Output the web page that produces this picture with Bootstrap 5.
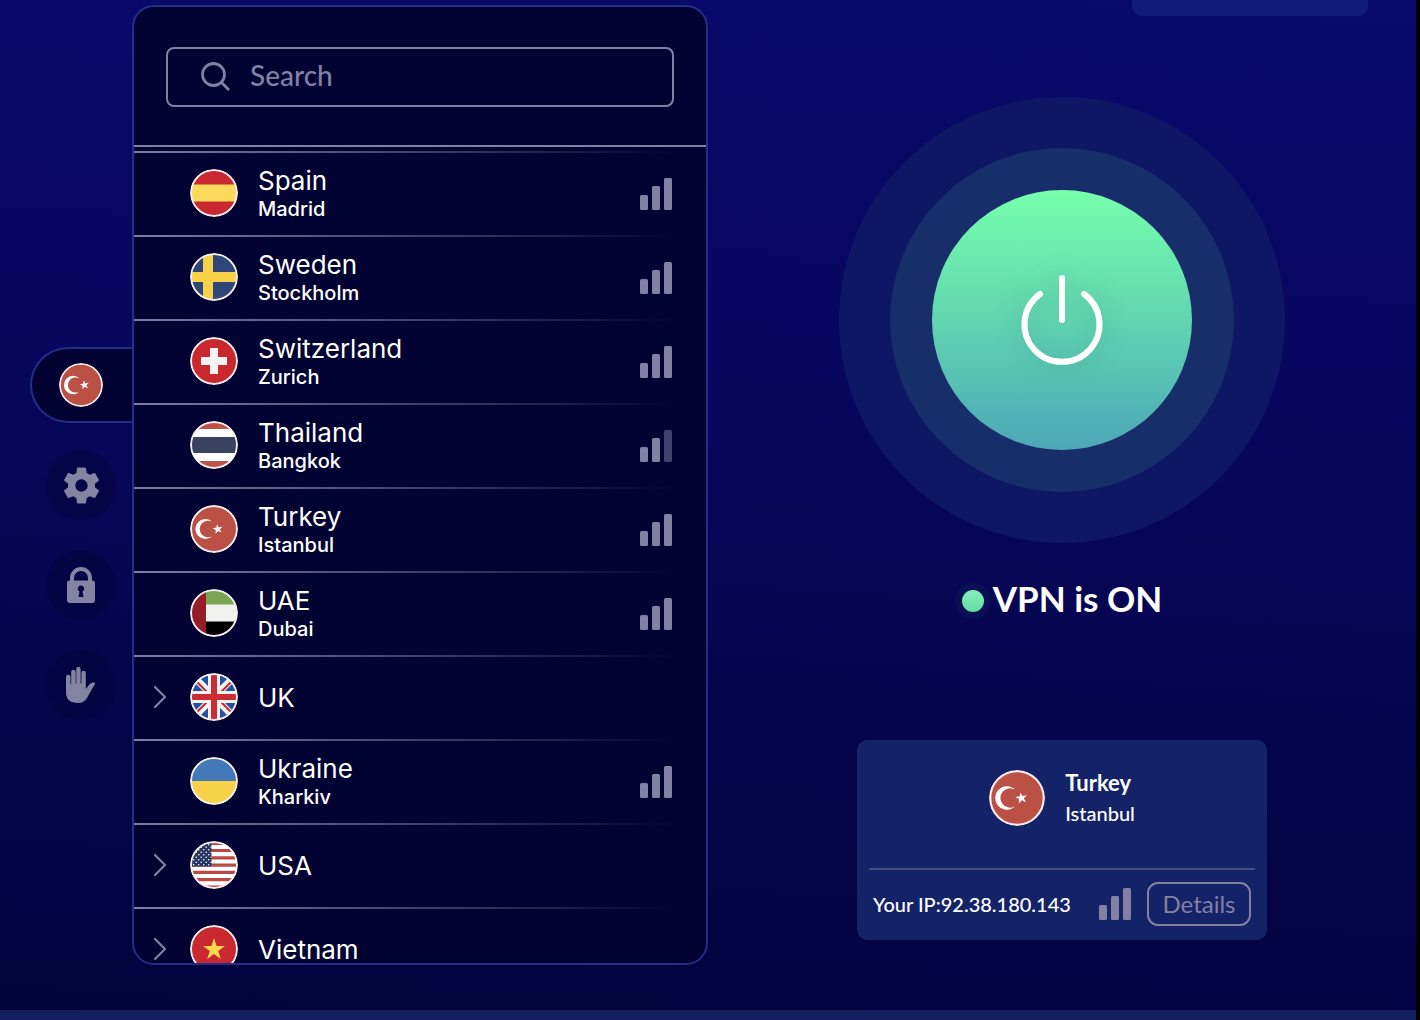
<!DOCTYPE html>
<html lang="en">
<head>
<meta charset="utf-8">
<meta name="viewport" content="width=device-width, initial-scale=1">
<title>VPN</title>
<link href="https://cdn.jsdelivr.net/npm/bootstrap@5.3.0/dist/css/bootstrap.min.css" rel="stylesheet">
<style>
  :root { --ink: #020233; --edge: #222e8a; --muted: #8280a3; }
  body { font-family: Lato, sans-serif; background: #000; color: #fff; }
  .app-shell { height: 100vh; min-height: 760px; margin-right: 4px; background: linear-gradient(184deg, #080a6c 0%, #070760 35%, #05054e 65%, #03033e 100%); }
  .app-main { min-height: 0; }
  .bottom-strip { height: 10px; background: #13205f; }

  /* left rail */
  .rail { width: 132px; padding-top: 347px; padding-left: 30px; }
  .rail-tab { height: 76px; padding-left: 27px; background: var(--ink); border: 2px solid var(--edge); border-right: 0; border-radius: 38px 0 0 38px; }
  .rail-btn { width: 70px; height: 70px; margin-left: 16px; background: #04043e99; color: #8583a2; }
  .rail-stack { gap: 30px; margin-top: 27px; }

  /* server list */
  .server-panel { width: 576px; margin: 5px 0 45px; background: var(--ink); border: 2px solid var(--edge); border-radius: 22px; }
  .search-area { padding: 40px 32px 38px; border-bottom: 2px solid var(--muted); }
  .search-field { height: 60px; border: 2px solid var(--muted); border-radius: 8px; padding: 0 32px; gap: 18px; color: var(--muted); }
  .search-field input { background: none; border: 0; outline: 0; color: #fff; font-size: 28px; font-weight: 500; line-height: 36px; padding: 0 0 4px; }
  .search-field input::placeholder { color: var(--muted); opacity: 1; }
  .server-list { margin-top: 4px; min-height: 0; overflow-y: auto; scrollbar-width: none; font-family: Inter, sans-serif; }
  .server-list::-webkit-scrollbar { display: none; }
  .server-row { flex: none; height: 84px; border: 0; padding: 0 34px 0 0; color: #fff; text-align: left;
    background: linear-gradient(90deg, #7f7da3 0%, #5a5984 30%, #25254f 70%, transparent 95%) top / 100% 2px no-repeat; }
  .caret-slot { width: 56px; padding-left: 19px; color: var(--muted); }
  .flag { flex: none; display: block; border-radius: 50%; }
  .flag-48 { width: 48px; height: 48px; }
  .flag-44 { width: 44px; height: 44px; }
  .flag-56 { width: 56px; height: 56px; }
  .names { margin-left: 20px; padding-top: 4px; }
  .country { font-size: 26px; line-height: 28px; }
  .country:only-child { padding-bottom: 2px; }
  .city { font-size: 20px; line-height: 28px; font-weight: 500; }
  .signal { width: 32px; height: 32px; color: var(--muted); }
  .server-row .signal { margin-top: 2px; }

  /* connection stage */
  .top-chip { height: 16px; width: 236px; margin-right: 48px; background: #101b7a; border-radius: 0 0 10px 10px; }
  .ring-outer { width: 446px; height: 446px; margin-top: 81px; background: #0d1763; }
  .ring-inner { width: 344px; height: 344px; background: #182e6b; }
  .power-btn { width: 260px; height: 260px; background: linear-gradient(#76ffac, #60d4b0 52%, #4ca7b8); }
  .power-btn svg { filter: drop-shadow(0 0 12px #2a6a6a55); }
  .status { margin-top: 31px; gap: 9px; }
  .status-text { font-size: 35px; line-height: 48px; font-weight: 700; }
  .status-dot { width: 22px; height: 22px; margin-top: 6px; background: linear-gradient(#86eebb, #62dda0); box-shadow: 0 0 0 7px #0a1055; }
  .info-card { width: 410px; margin-top: 118px; padding: 0 12px 14px; border-radius: 10px; background: #142368; }
  .info-head { padding: 28px 0 40px; gap: 20px; border-bottom: 2px solid #454b81; }
  .info-country { font-size: 22px; line-height: 30px; font-weight: 700; }
  .info-city, .ip-text { font-size: 20px; line-height: 30px; font-weight: 500; }
  .info-foot { padding: 12px 4px 0; }
  .details-btn { width: 104px; height: 44px; padding: 0; border: 2px solid var(--muted); border-radius: 11px; color: var(--muted); font-size: 24px; line-height: 36px; }
</style>
<script src="https://cdn.jsdelivr.net/npm/bootstrap@5.3.0/dist/js/bootstrap.bundle.min.js" defer></script>
</head>
<body>
<svg class="position-absolute" width="0" height="0" aria-hidden="true">
  <defs>
    <clipPath id="disc"><circle cx="24" cy="24" r="23"/></clipPath>
    <pattern id="stars" width="5" height="5" patternUnits="userSpaceOnUse"><rect width="5" height="5" fill="#25355f"/><circle cx="1.2" cy="1.2" r=".8" fill="#fff"/><circle cx="3.7" cy="3.7" r=".8" fill="#fff"/></pattern>
  </defs>
  <symbol id="rim" viewBox="0 0 48 48"><circle cx="24" cy="24" r="23" fill="none" stroke="#f8eeee" stroke-width="2"/></symbol>
  <symbol id="f-es" viewBox="0 0 48 48"><g clip-path="url(#disc)"><path fill="#c8282e" d="M0 0h48v48H0z"/><path fill="#fbda5b" d="M0 15.500h48v17H0z"/></g><use href="#rim"/></symbol>
  <symbol id="f-se" viewBox="0 0 48 48"><g clip-path="url(#disc)"><path fill="#2f4678" d="M0 0h48v48H0z"/><path fill="#f7d148" d="M13 0h10v48H13zM0 19h48v10H0z"/></g><use href="#rim"/></symbol>
  <symbol id="f-ch" viewBox="0 0 48 48"><g clip-path="url(#disc)"><path fill="#c8282e" d="M0 0h48v48H0z"/><path fill="#f3f3f3" d="M20 11h8v9h9v8h-9v9h-8v-9h-9v-8h9z"/></g><use href="#rim"/></symbol>
  <symbol id="f-th" viewBox="0 0 48 48"><g clip-path="url(#disc)"><path fill="#bd5145" d="M0 0h48v48H0z"/><path fill="#fff" d="M0 8h48v32H0z"/><path fill="#39435f" d="M0 16h48v16H0z"/></g><use href="#rim"/></symbol>
  <symbol id="f-tr" viewBox="0 0 48 48"><g clip-path="url(#disc)"><path fill="#bb5044" d="M0 0h48v48H0z"/><path fill="#fff" d="M22.500 17A10 10 0 1 0 22.500 31 8.300 8.300 0 1 1 22.500 17zM27.100 19.200l1.500 3 3.900-.5-2.700 2.500 1.900 3.400-3.500-1.600-2.700 2.700.3-3.800-3.200-1.700 3.700-.7z"/></g><use href="#rim"/></symbol>
  <symbol id="f-ae" viewBox="0 0 48 48"><g clip-path="url(#disc)"><path fill="#f1f1f0" d="M0 0h48v48H0z"/><path fill="#7ca553" d="M0 0h48v15.500H0z"/><path d="M0 32.500h48V48H0z"/><path fill="#941d27" d="M0 0h16v48H0z"/></g><use href="#rim"/></symbol>
  <symbol id="f-gb" viewBox="0 0 48 48"><g clip-path="url(#disc)"><path fill="#2450a6" d="M0 0h48v48H0z"/><path stroke="#f3f3f3" stroke-width="7" d="M0 0l48 48M48 0L0 48"/><path stroke="#c8282e" stroke-width="2" d="M1 3l22 22M47 3L25 25M1 45l22-22M47 45L25 23"/><path stroke="#f3f3f3" stroke-width="12" d="M24 0v48M0 24h48"/><path stroke="#cb2d35" stroke-width="6" d="M24 0v48M0 24h48"/></g><use href="#rim"/></symbol>
  <symbol id="f-ua" viewBox="0 0 48 48"><g clip-path="url(#disc)"><path fill="#427ab9" d="M0 0h48v24H0z"/><path fill="#f7d148" d="M0 24h48v24H0z"/></g><use href="#rim"/></symbol>
  <symbol id="f-us" viewBox="0 0 48 48"><g clip-path="url(#disc)"><path fill="#fff" d="M0 0h48v48H0z"/><path stroke="#b94a43" stroke-width="3.200" d="M0 2.500h48M0 9.500h48M0 16.800h48M0 24.100h48M0 31.400h48M0 38.700h48M0 46h48"/><path fill="url(#stars)" d="M0 0h21.500v25.500H0z"/></g><use href="#rim"/></symbol>
  <symbol id="f-vn" viewBox="0 0 48 48"><g clip-path="url(#disc)"><path fill="#c8282e" d="M0 0h48v48H0z"/><path fill="#fbd84f" d="M24 13l2.600 8h8.400l-6.800 5 2.600 8-6.800-5-6.800 5 2.600-8-6.800-5h8.400z"/></g><use href="#rim"/></symbol>
  <symbol id="bars" viewBox="0 0 32 32"><g fill="currentColor"><rect y="17" width="8" height="15" rx="1.500"/><rect x="12" y="8" width="8" height="24" rx="1.500"/><rect x="24" width="8" height="32" rx="1.500"/></g></symbol>
  <symbol id="bars-weak" viewBox="0 0 32 32"><g fill="currentColor"><rect y="17" width="8" height="15" rx="1.500"/><rect x="12" y="8" width="8" height="24" rx="1.500"/><rect x="24" width="8" height="32" rx="1.500" opacity=".5"/></g></symbol>
  <symbol id="caret" viewBox="0 0 14 24"><path d="M2 2l10 10-10 10" fill="none" stroke="currentColor" stroke-width="2.200" stroke-linecap="round" stroke-linejoin="round"/></symbol>
</svg>

<div class="app-shell d-flex flex-column">
  <main class="app-main d-flex flex-grow-1">
    <nav class="rail flex-shrink-0" aria-label="Sections">
      <button class="rail-tab d-flex align-items-center w-100" type="button" aria-label="Locations"><svg class="flag flag-44"><use href="#f-tr"/></svg></button>
      <div class="rail-stack d-flex flex-column">
        <button class="rail-btn btn border-0 rounded-circle p-0 d-flex align-items-center justify-content-center" type="button" aria-label="Settings">
          <svg width="45" height="45" viewBox="0 0 24 24" fill="currentColor"><path d="M19.140 12.940c.04-.3.06-.61.06-.94 0-.32-.02-.64-.07-.94l2.030-1.580c.18-.14.23-.41.12-.61l-1.920-3.320c-.12-.22-.37-.29-.59-.22l-2.390.96c-.5-.38-1.030-.7-1.620-.94l-.36-2.540c-.04-.24-.24-.41-.48-.41h-3.840c-.24 0-.43.17-.47.41l-.36 2.540c-.59.24-1.130.57-1.620.94l-2.390-.96c-.22-.08-.47 0-.59.22L2.740 8.870c-.12.21-.08.47.12.61l2.030 1.580c-.05.3-.09.63-.09.94s.02.64.07.94l-2.030 1.580c-.18.14-.23.41-.12.61l1.920 3.320c.12.22.37.29.59.22l2.390-.96c.5.38 1.030.7 1.620.94l.36 2.540c.05.24.24.41.48.41h3.840c.24 0 .44-.17.47-.41l.36-2.540c.59-.24 1.130-.56 1.620-.94l2.390.96c.22.08.47 0 .59-.22l1.920-3.320c.12-.22.07-.47-.12-.61l-2.010-1.580zM12 15.300A3.300 3.300 0 1 1 12 8.700a3.300 3.300 0 0 1 0 6.600z"/></svg>
        </button>
        <button class="rail-btn btn border-0 rounded-circle p-0 d-flex align-items-center justify-content-center" type="button" aria-label="Privacy">
          <svg width="28" height="36" viewBox="0 0 28 36" fill="currentColor"><path fill-rule="evenodd" d="M3 13.500V11a11 11 0 0 1 22 0v2.500q3 0 3 2.500v17q0 3-3 3H3q-3 0-3-3V16q0-2.500 3-2.500zM7 13.500h14V11a7 7 0 0 0-14 0zM12.500 24.500L11.500 30h5l-1-5.500a3.200 3.200 0 1 0-3 0z"/></svg>
        </button>
        <button class="rail-btn btn border-0 rounded-circle p-0 d-flex align-items-center justify-content-center" type="button" aria-label="Blocking">
          <svg width="30" height="36" viewBox="0 0 30 36" fill="currentColor"><path d="M0 10a2 2 0 0 1 4.500 0v7h.7V5a2 2 0 0 1 4.500 0v11.500h.6V2a2.100 2.100 0 0 1 4.300 0v14.500h.8V6a2.100 2.100 0 0 1 4.400 0v16l4-5q1.800-2 4.300-1.500 2 .5.300 2.500L21.500 30q-3 6-9.500 6Q0 36 0 25z"/></svg>
        </button>
      </div>
    </nav>

    <section class="server-panel flex-shrink-0 d-flex flex-column overflow-hidden" aria-label="Servers">
      <div class="search-area">
        <label class="search-field d-flex align-items-center">
          <svg width="32" height="32" viewBox="0 0 32 32" fill="none" stroke="currentColor" stroke-width="2.800"><circle cx="13.500" cy="13.500" r="11"/><path d="M21 21l8 8"/></svg>
          <input class="flex-grow-1" type="text" placeholder="Search" aria-label="Search">
        </label>
      </div>
      <div class="server-list flex-grow-1 d-flex flex-column" id="servers"></div>
    </section>

    <section class="flex-grow-1 d-flex flex-column align-items-center">
      <div class="top-chip align-self-end flex-shrink-0"></div>
      <div class="ring-outer rounded-circle flex-shrink-0 d-flex align-items-center justify-content-center">
        <div class="ring-inner rounded-circle d-flex align-items-center justify-content-center">
          <button class="power-btn btn border-0 rounded-circle p-0" type="button" aria-label="Turn VPN off">
            <svg width="260" height="260" viewBox="0 0 260 260" fill="none" stroke="#fff" stroke-width="6" stroke-linecap="round"><path d="M108 104a37.500 37.500 0 1 0 44 0M130 88v42"/></svg>
          </button>
        </div>
      </div>
      <div class="status d-flex align-items-center"><span class="status-dot rounded-circle"></span><span class="status-text">VPN is ON</span></div>
      <div class="info-card">
        <div class="info-head d-flex align-items-center justify-content-center">
          <svg class="flag flag-56"><use href="#f-tr"/></svg>
          <div><div class="info-country">Turkey</div><div class="info-city">Istanbul</div></div>
        </div>
        <div class="info-foot d-flex align-items-center">
          <span class="ip-text">Your IP:92.38.180.143</span>
          <svg class="signal ms-auto me-3"><use href="#bars"/></svg>
          <button class="details-btn btn" type="button">Details</button>
        </div>
      </div>
    </section>
  </main>
  <footer class="bottom-strip flex-shrink-0"></footer>
</div>
<script>
  const servers = [
    ['es', 'Spain', 'Madrid'], ['se', 'Sweden', 'Stockholm'], ['ch', 'Switzerland', 'Zurich'],
    ['th', 'Thailand', 'Bangkok', 'bars-weak'], ['tr', 'Turkey', 'Istanbul'], ['ae', 'UAE', 'Dubai'],
    ['gb', 'UK'], ['ua', 'Ukraine', 'Kharkiv'], ['us', 'USA'], ['vn', 'Vietnam']
  ];
  document.getElementById('servers').innerHTML = servers.map(([code, country, city, bars = 'bars']) => `
    <button class="server-row d-flex align-items-center w-100" type="button">
      <span class="caret-slot flex-shrink-0">${city ? '' : '<svg class="d-block" width="14" height="24"><use href="#caret"/></svg>'}</span>
      <svg class="flag flag-48"><use href="#f-${code}"/></svg>
      <span class="names d-flex flex-column"><span class="country">${country}</span>${city ? `<span class="city">${city}</span>` : ''}</span>
      ${city ? `<svg class="signal ms-auto"><use href="#${bars}"/></svg>` : ''}
    </button>`).join('');
</script>
</body>
</html>
